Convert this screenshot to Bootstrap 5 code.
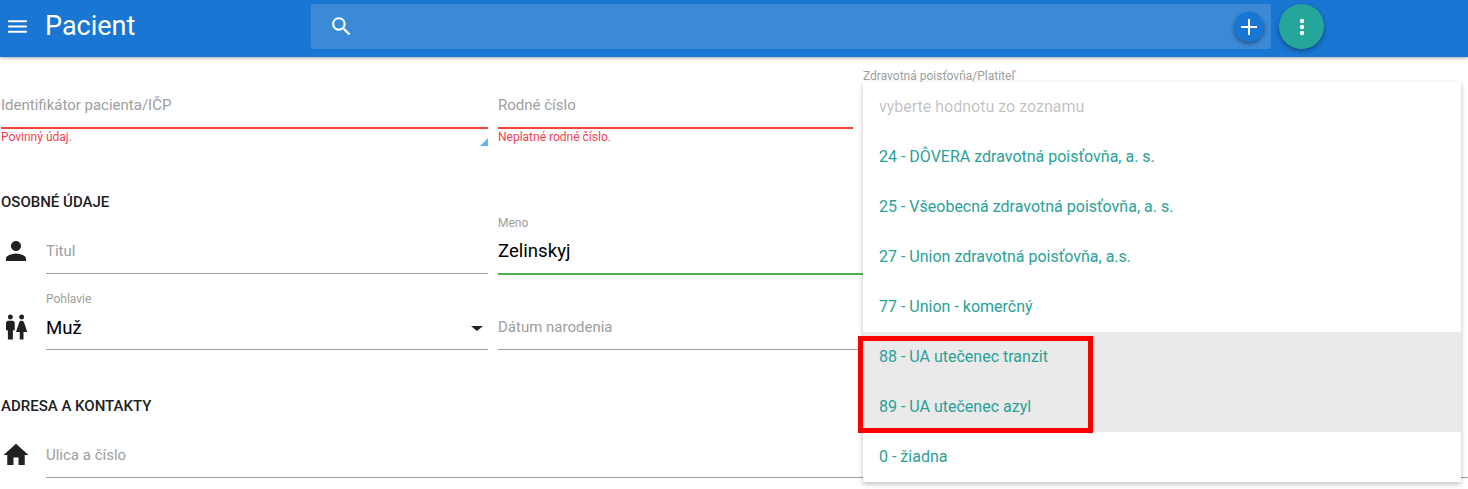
<!DOCTYPE html>
<html lang="sk">
<head>
<meta charset="utf-8">
<title>Pacient</title>
<link rel="stylesheet" href="https://cdn.jsdelivr.net/npm/bootstrap@5.3.0/dist/css/bootstrap.min.css">
<style>
html,body{height:489px;overflow:hidden;background:#fff;}
body{font-family:Roboto,"Liberation Sans",sans-serif;position:relative;}
.topbar{height:57px;background:#1976d2;box-shadow:0 1px 3px rgba(0,0,0,.35);padding-left:6px;position:relative;z-index:2;}
.menu-ic{width:25px;height:25px;fill:#fff;margin-left:-1px;}
.page-title{font-size:27px;color:#fff;margin-left:15px;width:266px;line-height:48px;margin-bottom:2px;}
.searchbox{width:960px;height:45px;background:rgba(255,255,255,.15);border-radius:2px;padding:0 7px 0 18px;}
.search-ic{width:25px;height:25px;fill:#fff;}
.add-btn{width:30px;height:30px;border-radius:50%;background:#1976d2;box-shadow:0 2px 4px rgba(0,0,0,.4);padding:0;border:0;}
.add-btn svg{width:16px;height:16px;stroke:#fff;stroke-width:2;display:block;margin:auto;}
.fab-btn{width:45px;height:45px;border-radius:50%;background:#26a69a;box-shadow:0 2px 5px rgba(0,0,0,.35);margin-left:8px;padding:0;border:0;}
.fab-btn svg{width:6px;height:20px;fill:#fff;display:block;margin:auto;}
.form-area{padding-left:1px;}
.c-one{width:487px;flex:none;}
.c-two{width:355px;flex:none;}
.c-wide{width:365px;flex:none;}
.with-ic{display:flex;}
.ic-cell{width:45px;flex:none;display:flex;align-items:flex-end;padding-bottom:8px;}
.ic-cell svg{width:30px;height:30px;fill:#212121;}
.fld{flex:1;height:60px;border-bottom:1px solid #9e9e9e;position:relative;display:flex;flex-direction:column;justify-content:flex-end;}
.fld.tall{height:76px;}
.fld.err{border-bottom:2px solid #f44336;}
.fld.tall.ok{border-bottom:2px solid #4caf50;height:77px;margin-bottom:-1px;}
.ph{font-size:15px;color:#9e9e9e;line-height:20px;margin-bottom:12px;}
.flabel{font-size:12px;color:#9e9e9e;line-height:14px;position:absolute;top:18px;left:0;}
.fval{font-size:18.6px;color:#000;line-height:24px;margin-bottom:9px;}
.fld.ok .fval{margin-bottom:10px;}
.errtxt{font-size:12px;color:#f43f50;line-height:14px;margin-top:1px;}
.hint-tri{position:absolute;right:0;bottom:-19px;width:8px;height:8px;background:#64b5f6;clip-path:polygon(100% 0,100% 100%,0 100%);}
.sel-arrow{position:absolute;right:5px;top:52px;width:0;height:0;border-left:6px solid transparent;border-right:6px solid transparent;border-top:5px solid #212121;}
.sect{font-size:15px;font-weight:500;color:#212121;line-height:20px;text-transform:uppercase;}
.r-first{padding-top:12px;}
.s-one{margin-top:48px;}
.r-titul{margin-top:-14px;}
.s-two{margin-top:46px;}
.r-ulica{margin-top:2px;}
.payer-label{position:absolute;left:863px;top:69px;font-size:12px;line-height:14px;color:#9e9e9e;z-index:3;}
.payer-menu{position:absolute;left:863px;top:82px;width:598px;background:#fff;box-shadow:0 2px 5px rgba(0,0,0,.26);z-index:4;margin:0;padding:0;list-style:none;}
.payer-menu li{height:50px;line-height:50px;padding-left:16px;font-size:16px;color:#2aa198;}
.payer-menu li.off{color:rgba(0,0,0,.26);}
.payer-menu li.hl{background:#eaeaea;}
.mark-box{position:absolute;left:858px;top:336px;width:235px;height:97px;border:5px solid #f00;z-index:5;}
</style>
</head>
<body>
<header class="topbar d-flex align-items-center pb-1">
  <svg class="menu-ic flex-none" viewBox="0 0 24 24"><path d="M3 18h18v-2H3v2zm0-5h18v-2H3v2zm0-7v2h18V6H3z"/></svg>
  <div class="page-title">Pacient</div>
  <div class="searchbox d-flex align-items-center justify-content-between">
    <svg class="search-ic" viewBox="0 0 24 24"><path d="M15.5 14h-.79l-.28-.27C15.41 12.59 16 11.11 16 9.5 16 5.91 13.09 3 9.5 3S3 5.91 3 9.5 5.91 16 9.5 16c1.61 0 3.09-.59 4.23-1.57l.27.28v.79l5 4.99L20.49 19l-4.99-5zm-6 0C7.01 14 5 11.99 5 9.5S7.01 5 9.5 5 14 7.01 14 9.5 11.99 14 9.5 14z"/></svg>
    <button class="add-btn d-flex align-items-center" type="button" aria-label="Pridať"><svg viewBox="0 0 16 16"><path d="M8 0v16M0 8h16"/></svg></button>
  </div>
  <button class="fab-btn d-flex align-items-center" type="button" aria-label="Menu"><svg viewBox="0 0 6 20"><circle cx="3" cy="4" r="2.2"/><circle cx="3" cy="10" r="2.2"/><circle cx="3" cy="16" r="2.2"/></svg></button>
</header>

<main class="form-area">
  <div class="d-flex r-first" style="gap:10px">
    <div class="c-one"><div class="fld err"><span class="ph">Identifikátor pacienta/IČP</span><i class="hint-tri"></i></div><div class="errtxt">Povinný údaj.</div></div>
    <div class="c-two"><div class="fld err"><span class="ph">Rodné číslo</span></div><div class="errtxt">Neplatné rodné číslo.</div></div>
  </div>
  <div class="sect s-one">Osobné údaje</div>
  <div class="d-flex r-titul" style="gap:10px">
    <div class="c-one with-ic">
      <div class="ic-cell"><svg viewBox="0 0 24 24"><path d="M12 12c2.21 0 4-1.79 4-4s-1.79-4-4-4-4 1.79-4 4 1.79 4 4 4zm0 2c-2.67 0-8 1.34-8 4v2h16v-2c0-2.66-5.33-4-8-4z"/></svg></div>
      <div class="fld tall"><span class="ph">Titul</span></div>
    </div>
    <div class="c-wide"><div class="fld tall ok"><span class="flabel">Meno</span><span class="fval">Zelinskyj</span></div></div>
  </div>
  <div class="d-flex" style="gap:10px">
    <div class="c-one with-ic">
      <div class="ic-cell"><svg viewBox="0 0 24 24"><path d="M5.5 22v-7.5H4V9c0-1.1.9-2 2-2h3c1.1 0 2 .9 2 2v5.5H9.5V22h-4zM18 22v-6h3l-2.54-7.63C18.18 7.55 17.42 7 16.56 7h-.12c-.86 0-1.63.55-1.9 1.37L12 16h3v6h3zM7.5 6c1.11 0 2-.89 2-2s-.89-2-2-2-2 .89-2 2 .89 2 2 2zm9 0c1.11 0 2-.89 2-2s-.89-2-2-2-2 .89-2 2 .89 2 2 2z"/></svg></div>
      <div class="fld tall"><span class="flabel">Pohlavie</span><span class="fval">Muž</span><i class="sel-arrow"></i></div>
    </div>
    <div class="c-wide"><div class="fld tall"><span class="ph">Dátum narodenia</span></div></div>
  </div>
  <div class="sect s-two">Adresa a kontakty</div>
  <div class="d-flex r-ulica">
    <div class="with-ic w-100">
      <div class="ic-cell"><svg viewBox="0 0 24 24"><path d="M10 20v-6h4v6h5v-8h3L12 3 2 12h3v8z"/></svg></div>
      <div class="fld"><span class="ph">Ulica a číslo</span></div>
    </div>
  </div>
</main>

<div class="payer-label">Zdravotná poisťovňa/Platiteľ</div>
<ul class="payer-menu">
  <li class="off">vyberte hodnotu zo zoznamu</li>
  <li>24 - DÔVERA zdravotná poisťovňa, a. s.</li>
  <li>25 - Všeobecná zdravotná poisťovňa, a. s.</li>
  <li>27 - Union zdravotná poisťovňa, a.s.</li>
  <li>77 - Union - komerčný</li>
  <li class="hl">88 - UA utečenec tranzit</li>
  <li class="hl">89 - UA utečenec azyl</li>
  <li>0 - žiadna</li>
</ul>
<div class="mark-box"></div>
<script src="https://cdn.jsdelivr.net/npm/bootstrap@5.3.0/dist/js/bootstrap.bundle.min.js"></script>
</body>
</html>
